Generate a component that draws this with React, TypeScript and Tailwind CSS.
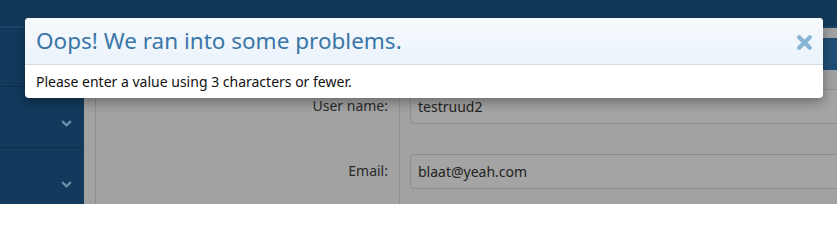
import { ChevronDown } from "lucide-react";

const font = { fontFamily: '"Noto Sans", "Open Sans", sans-serif' };

function SidebarItem({ h, chevron }: { h: string; chevron?: boolean }) {
  return (
    <div className={`${h} border-b border-[#0c2f4c] flex items-center justify-end pr-[10px]`}>
      {chevron && <ChevronDown className="w-[15px] h-[15px] text-[#6f90aa] mt-[12px]" strokeWidth={3.5} />}
    </div>
  );
}

function FormRow({ label, value }: { label: string; value: string }) {
  return (
    <div className="flex h-[65px]">
      <div className="w-[304px] border-r border-[#939393] pr-[11px] pt-[2px] flex justify-end items-start">
        <span className="text-[14px] leading-[30px] text-[#2a2a2a]">{label}</span>
      </div>
      <div className="flex-1 pl-[10px]">
        <div className="h-[35px] rounded-[4px] border border-[#8f8f8f] bg-[#a4a4a4] -mr-[10px] pl-[7px] text-[14px] leading-[33px] text-[#222]">
          {value}
        </div>
      </div>
    </div>
  );
}

export default function App() {
  return (
    <div className="relative w-[837px] h-[204px] overflow-hidden bg-[#a2a2a2]" style={font}>
      <div className="h-[28px] bg-[#123859] border-b-2 border-[#1b4568]" />
      <div className="flex">
        <div className="w-[84px] h-[176px] bg-[#113a5c]">
          <SidebarItem h="h-[59px]" />
          <SidebarItem h="h-[61px]" chevron />
          <SidebarItem h="h-[61px]" chevron />
        </div>
        <div className="flex-1 pl-[11px]">
          <div className="border-l border-[#8d8d8d] h-[176px] pt-[10px]">
            <div className="h-[32px] bg-[#1f4e75]" />
            <div className="pt-[19px]">
              <FormRow label="User name:" value="testruud2" />
              <FormRow label="Email:" value="blaat@yeah.com" />
            </div>
          </div>
        </div>
      </div>

      <div className="absolute left-[25px] top-[18px] w-[798px] rounded-[4px] bg-white shadow-[0_4px_12px_rgba(0,0,0,0.35)] overflow-hidden">
        <div className="h-[47px] flex items-center justify-between pl-[11px] pr-[10px] bg-gradient-to-b from-[#f7fafd] to-[#eaf3fb] border-b border-[#d3dbe3]">
          <span className="text-[22.5px] text-[#3a76a7]">Oops! We ran into some problems.</span>
          <svg width="17" height="17" viewBox="0 0 16 16" className="mt-[2px]">
            <path d="M3 3 L13 13 M13 3 L3 13" stroke="#88b4d5" strokeWidth="4" strokeLinecap="round" />
          </svg>
        </div>
        <div className="h-[33px] pl-[11px] flex items-center text-[14px] text-[#111]">
          Please enter a value using 3 characters or fewer.
        </div>
      </div>
    </div>
  );
}
